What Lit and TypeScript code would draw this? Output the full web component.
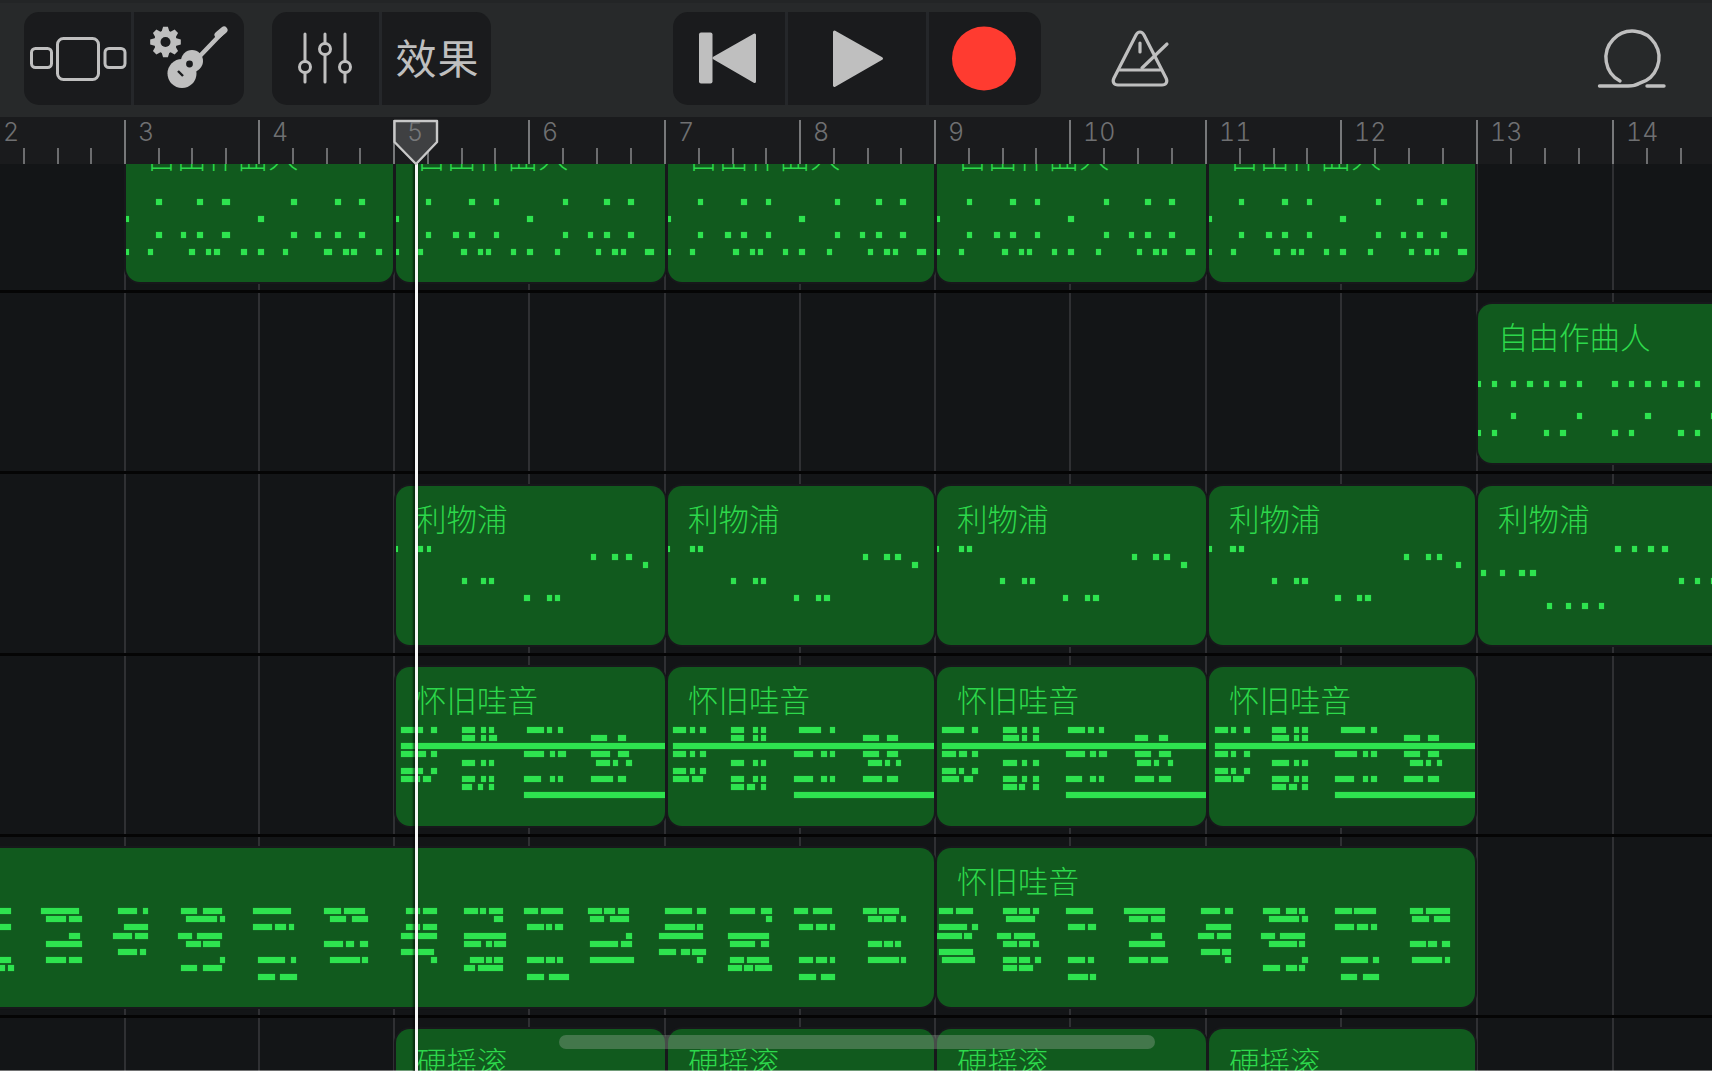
import { LitElement, html, css, svg } from "lit";
import { customElement } from "lit/decorators.js";

type Note = { r: number; x: number; w: number };
type Clip = { a: number; b: number; title?: string; notes: Note[] };

// Note runs are written as [start,end,...] pairs per pitch row, measured on a magnified view.
const runs = (x0: number, k: number, rows: Record<number, number[]>): Note[] => {
  const out: Note[] = [];
  for (const r of Object.keys(rows)) {
    const p = rows[+r];
    for (let i = 0; i < p.length; i += 2) {
      out.push({ r: +r, x: x0 + p[i] / k, w: (p[i + 1] - p[i]) / k });
    }
  }
  return out;
};
const shift = (n: Note[], d: number): Note[] => n.map((v) => ({ ...v, x: v.x + d }));

const K26 = 1568 / 600;
const K29 = 1568 / 540;
const K28 = 1568 / 550;

// Row 1
const r1a = runs(100, K26, {
  2: [146, 162, 254, 270, 319, 341, 498, 514, 613, 629, 678, 693],
  4: [68, 76, 413, 428],
  6: [146, 162, 211, 226, 254, 270, 319, 341, 498, 514, 563, 578, 613, 629, 678, 693],
  8: [68, 76, 125, 140, 232, 248, 276, 291, 298, 313, 369, 385, 413, 428, 477, 492, 585, 607, 635, 650, 657, 672, 721, 737],
});
const r1b = runs(100, K26, {
  2: [851, 865, 965, 980, 1030, 1044, 1209, 1224, 1317, 1332, 1381, 1396],
  4: [773, 780, 1116, 1131],
  6: [851, 865, 923, 937, 965, 980, 1030, 1044, 1209, 1224, 1274, 1288, 1317, 1332, 1381, 1396],
  8: [773, 780, 830, 845, 944, 958, 987, 1002, 1009, 1023, 1073, 1088, 1116, 1131, 1188, 1203, 1296, 1310, 1339, 1354, 1361, 1375, 1425, 1447],
});

// Row 2
const r2 = runs(1200, 3, {
  2: [834, 842, 875, 891, 933, 949, 982, 998, 1032, 1048, 1081, 1097, 1131, 1147, 1237, 1254, 1287, 1303, 1336, 1353, 1386, 1402, 1435, 1451, 1485, 1501],
  6: [933, 949, 1131, 1147, 1336, 1353, 1534, 1550],
  8: [834, 842, 875, 891, 1032, 1048, 1081, 1097, 1237, 1254, 1287, 1303, 1435, 1451, 1485, 1501],
});

// Row 3
const r3a = runs(380, K26, {
  0: [40, 48, 100, 112, 122, 133],
  1: [550, 565, 607, 622, 643, 658],
  2: [686, 701],
  4: [213, 227, 263, 277, 284, 299],
  6: [377, 392, 435, 450, 456, 471],
});
const r3b = runs(380, K26, {
  0: [752, 758, 809, 823, 830, 845],
  1: [1261, 1275, 1318, 1333, 1347, 1362],
  2: [1390, 1405],
  4: [916, 931, 974, 988, 995, 1010],
  6: [1081, 1096, 1139, 1153, 1160, 1175],
});
const r3d = runs(1200, 3, {
  0: [27, 35, 91, 108, 117, 133],
  1: [611, 628, 677, 694, 710, 727],
  2: [768, 784],
  4: [216, 232, 282, 298, 307, 323],
  6: [405, 422, 471, 487, 496, 512],
});
const r3e = runs(1200, 3, {
  0: [1245, 1262, 1295, 1312, 1345, 1362, 1386, 1403],
  3: [843, 859, 900, 916, 958, 974, 991, 1007],
  4: [1436, 1451, 1485, 1501, 1534, 1550],
  7: [1040, 1056, 1098, 1113, 1147, 1163, 1197, 1213],
});

// Row 4
const r4a = runs(380, K26, {
  0: [55, 112, 133, 148, 213, 248, 263, 278, 284, 299, 385, 428, 435, 450, 464, 479],
  1: [213, 248, 263, 278, 284, 306, 550, 593, 622, 643],
  2: [55, 744],
  3: [55, 119, 133, 148, 377, 428, 443, 457, 464, 486, 550, 600, 622, 651],
  4: [213, 248, 263, 278, 284, 299, 564, 600, 608, 622, 643, 658],
  5: [55, 112, 133, 148],
  6: [55, 105, 112, 133, 213, 248, 263, 278, 284, 299, 377, 421, 443, 457, 464, 479, 550, 608, 622, 643],
  7: [213, 241, 255, 270, 284, 299],
  8: [377, 744],
});
const r4b = runs(380, K26, {
  0: [765, 801, 809, 823, 837, 852, 916, 952, 974, 989, 995, 1010, 1096, 1153, 1175, 1189],
  1: [916, 952, 974, 989, 995, 1010, 1261, 1304, 1326, 1355],
  2: [765, 1448],
  3: [765, 801, 809, 823, 837, 852, 1081, 1131, 1153, 1167, 1175, 1189, 1261, 1304, 1326, 1355],
  4: [916, 952, 974, 989, 995, 1010, 1275, 1311, 1319, 1333, 1348, 1362],
  5: [765, 801, 809, 823, 837, 852],
  6: [765, 809, 816, 845, 916, 952, 974, 989, 995, 1010, 1081, 1131, 1153, 1167, 1175, 1189, 1261, 1311, 1326, 1355],
  7: [916, 952, 960, 981, 995, 1010],
  8: [1081, 1448],
});
const r4c = runs(930, K28, {
  0: [34, 98, 121, 137, 207, 247, 262, 278, 293, 310, 394, 442, 449, 466, 482, 497],
  1: [207, 254, 262, 278, 293, 310, 584, 622, 654, 678],
  2: [34, 787],
  3: [34, 74, 82, 105, 121, 137, 388, 442, 457, 474, 482, 505, 584, 630, 654, 686],
  4: [207, 247, 262, 278, 293, 310, 591, 630, 638, 654, 678, 693],
  5: [34, 74, 82, 98, 121, 137],
  6: [34, 82, 97, 122, 207, 247, 262, 278, 293, 310, 388, 434, 457, 474, 482, 497, 584, 638, 654, 686],
  7: [207, 247, 254, 270, 293, 310],
  8: [388, 787],
});
const r4d = runs(930, K28, {
  0: [811, 850, 857, 873, 896, 912, 975, 1014, 1038, 1053, 1061, 1077, 1171, 1241, 1256, 1273],
  1: [975, 1022, 1038, 1053, 1061, 1077, 1350, 1398, 1421, 1452],
  2: [811, 1553],
  3: [811, 850, 857, 873, 896, 912, 1155, 1217, 1233, 1249, 1256, 1273, 1350, 1398, 1421, 1452],
  4: [975, 1022, 1038, 1053, 1061, 1077, 1367, 1405, 1413, 1429, 1445, 1460],
  5: [811, 850, 857, 873, 896, 912],
  6: [811, 857, 865, 896, 975, 1022, 1038, 1053, 1061, 1077, 1155, 1210, 1233, 1249, 1256, 1273, 1350, 1405, 1421, 1452],
  7: [975, 1014, 1022, 1045, 1061, 1077],
  8: [1155, 1553],
});

// Row 5
const r5long = [
  ...runs(0, K26, {
    0: [0, 28, 107, 208, 308, 358, 373, 387, 474, 516, 531, 581, 660, 760, 847, 890, 898, 955, 1062, 1098, 1105, 1141],
    1: [121, 172, 179, 214, 487, 567, 574, 589, 861, 904, 919, 962],
    2: [0, 28, 323, 387, 660, 710, 718, 747, 754, 768, 1062, 1098, 1105, 1141],
    3: [179, 208, 294, 344, 352, 387, 466, 502, 516, 581, 1048, 1141],
    4: [121, 214, 487, 524, 531, 574, 847, 897, 904, 926, 940, 962],
    5: [308, 358, 366, 381, 1048, 1134],
    6: [0, 28, 121, 172, 179, 214, 574, 589, 674, 746, 760, 775, 861, 940, 947, 962, 1127, 1141],
    7: [0, 14, 22, 36, 474, 516, 531, 581],
    8: [674, 718, 732, 775],
  }),
  ...runs(400, K29, {
    0: [186, 226, 233, 250, 257, 298, 361, 402, 409, 474, 546, 586, 592, 624, 632, 665, 768, 849, 863, 889, 959, 1032, 1048, 1080, 1143, 1184, 1199, 1256, 1343, 1384, 1391, 1448],
    1: [274, 298, 553, 592, 609, 665, 1064, 1080, 1360, 1399, 1406, 1439, 1455, 1470],
    2: [370, 418, 425, 442, 449, 474, 768, 857, 863, 881, 1159, 1200, 1207, 1240, 1248, 1263],
    3: [186, 307, 656, 673, 753, 881, 952, 1072],
    4: [186, 234, 250, 266, 274, 307, 553, 633, 641, 673, 959, 1032, 1048, 1072, 1360, 1399, 1406, 1431, 1438, 1455],
    5: [753, 801, 817, 841, 849, 889],
    6: [202, 243, 250, 266, 274, 298, 370, 418, 425, 450, 457, 474, 553, 681, 863, 881, 959, 1000, 1008, 1072, 1159, 1200, 1207, 1240, 1248, 1263, 1360, 1448, 1455, 1470],
    7: [186, 218, 225, 298, 952, 992, 1000, 1024, 1032, 1080],
    8: [370, 418, 433, 490, 1159, 1207, 1223, 1263],
  }),
];
const r5b = runs(930, K28, {
  0: [26, 66, 74, 122, 207, 247, 254, 286, 293, 310, 388, 466, 552, 669, 772, 826, 842, 865, 950, 998, 1014, 1045, 1052, 1069, 1155, 1202, 1210, 1273, 1367, 1405, 1413, 1483],
  1: [216, 300, 567, 622, 629, 669, 967, 1053, 1061, 1077, 1374, 1421, 1437, 1483],
  2: [26, 105, 121, 137, 394, 442, 449, 474, 787, 857, 1155, 1210, 1217, 1249, 1256, 1273],
  3: [20, 90, 97, 121, 191, 231, 238, 300, 629, 661, 763, 810, 818, 857, 944, 983, 998, 1069],
  4: [207, 247, 254, 286, 293, 310, 567, 669, 967, 1045, 1052, 1069, 1367, 1413, 1421, 1445, 1460, 1483],
  5: [26, 122, 772, 826, 833, 857],
  6: [34, 128, 207, 247, 254, 286, 300, 317, 394, 442, 449, 466, 567, 622, 629, 678, 842, 857, 1061, 1077, 1171, 1249, 1264, 1280, 1374, 1460, 1468, 1483],
  7: [207, 247, 254, 294, 950, 998, 1014, 1045, 1052, 1069],
  8: [394, 450, 457, 474, 1171, 1217, 1233, 1280],
});

const FREE = "自由作曲人";
const LIV = "利物浦";
const WAH = "怀旧哇音";
const ROCK = "硬摇滚";

const ROWS: Clip[][] = [
  [
    { a: 126, b: 393, title: FREE, notes: r1a },
    { a: 396, b: 665, title: FREE, notes: r1b },
    { a: 668, b: 934, title: FREE, notes: shift(r1b, 272) },
    { a: 937, b: 1206, title: FREE, notes: shift(r1b, 541) },
    { a: 1209, b: 1475, title: FREE, notes: shift(r1b, 813) },
  ],
  [{ a: 1478, b: 1740, title: FREE, notes: r2 }],
  [
    { a: 396, b: 665, title: LIV, notes: r3a },
    { a: 668, b: 934, title: LIV, notes: r3b },
    { a: 937, b: 1206, title: LIV, notes: shift(r3b, 269) },
    { a: 1209, b: 1475, title: LIV, notes: r3d },
    { a: 1478, b: 1740, title: LIV, notes: r3e },
  ],
  [
    { a: 396, b: 665, title: WAH, notes: r4a },
    { a: 668, b: 934, title: WAH, notes: r4b },
    { a: 937, b: 1206, title: WAH, notes: r4c },
    { a: 1209, b: 1475, title: WAH, notes: r4d },
  ],
  [
    { a: -30, b: 934, notes: r5long },
    { a: 937, b: 1475, title: WAH, notes: r5b },
  ],
  [
    { a: 396, b: 665, title: ROCK, notes: [] },
    { a: 668, b: 934, title: ROCK, notes: [] },
    { a: 937, b: 1206, title: ROCK, notes: [] },
    { a: 1209, b: 1475, title: ROCK, notes: [] },
  ],
];

const BARS: [number, number][] = [
  [2, -10], [3, 125], [4, 259], [5, 394], [6, 529], [7, 665], [8, 800], [9, 935],
  [10, 1070], [11, 1206], [12, 1341], [13, 1477], [14, 1613],
];

const gearPath = (cx: number, cy: number, ro: number, ri: number, n: number) => {
  const pts: string[] = [];
  const step = (Math.PI * 2) / n;
  for (let i = 0; i < n; i++) {
    const t = i * step - Math.PI / 2;
    const at = (r: number, o: number) =>
      `${(cx + r * Math.cos(t + o)).toFixed(2)} ${(cy + r * Math.sin(t + o)).toFixed(2)}`;
    pts.push(at(ri, -step * 0.42), at(ro, -step * 0.2), at(ro, step * 0.2), at(ri, step * 0.42));
  }
  return "M" + pts.join("L") + "Z";
};

@customElement("app-root")
export class AppRoot extends LitElement {
  static styles = css`
    :host {
      display: block;
      width: 1712px;
      height: 1071px;
      overflow: hidden;
      background: #131517;
      font-family: "Inter", "Noto Sans CJK SC", sans-serif;
    }
    .page {
      position: relative;
      display: flex;
      flex-direction: column;
      width: 1712px;
      height: 1071px;
      overflow: hidden;
    }
    .toolbar {
      flex: none;
      box-sizing: border-box;
      height: 117px;
      display: flex;
      align-items: flex-start;
      padding: 12px 0 0 24px;
      background: #27292a;
      box-shadow: inset 0 3px 0 #232526;
    }
    .group {
      display: flex;
      height: 93px;
      border-radius: 15px;
      background: #1a1b1d;
      overflow: hidden;
      flex: none;
    }
    .group + .group { margin-left: 28px; }
    .group.transport { margin-left: 182px; }
    .cell { display: flex; align-items: center; justify-content: center; flex: none; }
    .cell + .cell { border-left: 3px solid #25272a; }
    .icon { display: block; flex: none; }
    .fx {
      box-sizing: border-box;
      width: 109px;
      padding-left: 2px;
      font-family: "Noto Sans CJK SC", sans-serif;
      font-size: 41px;
      line-height: 89px;
      height: 93px;
      letter-spacing: 1px;
      color: #bfbfbf;
      white-space: nowrap;
      text-align: center;
    }
    .free-icon { margin-top: 12px; flex: none; }
    .metro { margin-left: 64px; }
    .loop { margin-left: auto; margin-right: 40px; }
    .ruler {
      flex: none;
      position: relative;
      height: 47px;
      background: #1a1b1d;
    }
    .major, .minor { position: absolute; bottom: 0; width: 2px; }
    .major { top: 3px; background: #77787a; }
    .minor { height: 16px; background: #6c6d6f; }
    .num {
      position: absolute;
      top: 0;
      font-size: 25px;
      line-height: 30px;
      font-weight: 300;
      font-variant-numeric: tabular-nums;
      color: #6f7072;
    }
    .tracks {
      position: relative;
      flex: 1;
      overflow: hidden;
    }
    .grid {
      position: absolute;
      top: 0;
      bottom: 0;
      width: 2px;
      background: #2f3033;
    }
    .row {
      position: relative;
      box-sizing: border-box;
      height: 181.25px;
      border-bottom: 3px solid #050505;
    }
    .row.first { margin-top: -52.25px; }
    .clip {
      position: absolute;
      top: 11.3px;
      height: 159px;
      border-radius: 14px;
      background: #115a1e;
      box-shadow: 0 0 0 2px #17181b;
      overflow: hidden;
    }
    .title {
      padding: 16px 0 0 20px;
      font-family: "Noto Sans CJK SC", sans-serif;
      font-weight: 300;
      font-size: 30.5px;
      line-height: 32px;
      color: #2dd84b;
      white-space: nowrap;
    }
    .note {
      position: absolute;
      height: 6px;
      background: #2ee34f;
      box-shadow: 0 0 1px rgba(46, 227, 79, 0.6);
    }
    .playline {
      position: absolute;
      left: 415px;
      top: 160px;
      bottom: 0;
      width: 2.6px;
      background: #f6f6f6;
      box-shadow: -1px 0 2px 1px rgba(0, 0, 0, 0.55);
    }
    .playhead {
      position: absolute;
      left: 392px;
      top: 119px;
    }
    .headnum {
      position: absolute;
      left: 407.5px;
      top: 117px;
      font-size: 25px;
      line-height: 30px;
      font-weight: 300;
      color: #77787a;
    }
    .scrollbar {
      position: absolute;
      left: 559px;
      top: 1035px;
      width: 596px;
      height: 14px;
      border-radius: 7px;
      background: rgba(160, 176, 160, 0.35);
    }
    .edge {
      position: absolute;
      left: 0;
      right: 0;
      bottom: 0;
      height: 1.5px;
      background: rgba(255, 255, 255, 0.4);
    }
  `;

  private ruler() {
    const marks = [];
    for (let i = 0; i < BARS.length; i++) {
      const [n, x] = BARS[i];
      const next = i + 1 < BARS.length ? BARS[i + 1][1] : x + 136;
      if (x > 0) marks.push(html`<div class="major" style="left:${x - 1}px"></div>`);
      for (let k = 1; k < 4; k++) {
        const mx = x + ((next - x) * k) / 4;
        marks.push(html`<div class="minor" style="left:${mx - 1}px"></div>`);
      }
      if (n !== 5) marks.push(html`<div class="num" style="left:${Math.max(x + 13, 0)}px">${n}</div>`);
    }
    return marks;
  }

  private clip(c: Clip) {
    const w = c.b - c.a;
    return html`<div class="clip" style="left:${c.a}px;width:${w}px">
      ${c.title ? html`<div class="title">${c.title}</div>` : null}
      ${c.notes.map(
        (n) =>
          html`<div
            class="note"
            style="left:${(n.x - c.a).toFixed(1)}px;top:${(60 + 8.2 * n.r).toFixed(1)}px;width:${n.w.toFixed(1)}px"
          ></div>`
      )}
    </div>`;
  }

  render() {
    const ink = "#bfbfbf";
    const bg = "#1a1b1d";
    return html`<div class="page">
      <div class="toolbar">
        <div class="group">
          <div class="cell">
            <svg class="icon" width="107" height="93" viewBox="24 12 107 93" fill="none" stroke=${ink} stroke-width="3">
              <rect x="31.5" y="48.5" width="20" height="19" rx="4" />
              <rect x="57.5" y="38.5" width="41" height="41" rx="6" />
              <rect x="105" y="48.5" width="20" height="19" rx="4" />
            </svg>
          </div>
          <div class="cell">
            <svg class="icon" width="110" height="93" viewBox="134 12 110 93" fill=${ink}>
              <path d=${gearPath(165.5, 42, 15.5, 11.5, 8)} />
              <circle cx="165.5" cy="42" r="5" fill=${bg} />
              <circle cx="182" cy="73.5" r="14.5" />
              <circle cx="192" cy="61" r="11" />
              <path d="M198 58 L221 34" stroke=${ink} stroke-width="4.5" stroke-linecap="round" />
              <path d="M218 35 L224 30" stroke=${ink} stroke-width="7" stroke-linecap="round" />
              <circle cx="189.5" cy="64" r="3.4" fill=${bg} />
              <path d="M178 71 L183 76" stroke=${bg} stroke-width="2.4" />
            </svg>
          </div>
        </div>
        <div class="group">
          <div class="cell">
            <svg class="icon" width="107" height="93" viewBox="272 12 107 93" fill="none" stroke=${ink} stroke-width="3" stroke-linecap="round">
              <path d="M305 34V82M325 34V82M345 34V82" />
              <circle cx="305" cy="67" r="5.5" fill=${bg} />
              <circle cx="325" cy="49" r="5.5" fill=${bg} />
              <circle cx="345" cy="67" r="5.5" fill=${bg} />
            </svg>
          </div>
          <div class="cell"><div class="fx">效果</div></div>
        </div>
        <div class="group transport">
          <div class="cell">
            <svg class="icon" width="112" height="93" viewBox="673 12 112 93" fill=${ink} stroke=${ink} stroke-linejoin="round">
              <rect x="699" y="32.5" width="13.5" height="51" rx="2" stroke="none" />
              <path d="M714 58 L754.5 35 V81.5 Z" stroke-width="3" />
            </svg>
          </div>
          <div class="cell">
            <svg class="icon" width="138" height="93" viewBox="788 12 138 93" fill=${ink} stroke=${ink} stroke-linejoin="round">
              <path d="M834.5 32 L881.5 58.5 L834.5 85.5 Z" stroke-width="3" />
            </svg>
          </div>
          <div class="cell">
            <svg class="icon" width="112" height="93" viewBox="929 12 112 93">
              <circle cx="984" cy="58.5" r="32" fill="#ff3b30" />
            </svg>
          </div>
        </div>
        <svg class="icon free-icon metro" width="70" height="70" viewBox="1105 24 70 70" fill="none" stroke=${ink} stroke-width="3.2" stroke-linecap="round" stroke-linejoin="round">
          <path d="M1136 35 C1138 31 1142 31 1144 35 L1166 78 C1168 82 1166 85 1162 85 H1118 C1114 85 1112 82 1114 78 Z" />
          <path d="M1120 70 H1160" />
          <path d="M1140 43 V52" />
          <path d="M1142 68 L1167 44" />
        </svg>
        <svg class="icon free-icon loop" width="80" height="70" viewBox="1592 24 80 70" fill="none" stroke=${ink} stroke-width="3.4" stroke-linecap="round" stroke-linejoin="round">
          <path d="M1620 81 A26.5 26.5 0 1 1 1640 83 Q1635 86 1628 86 L1599.5 86" />
          <path d="M1647 86 H1664" />
        </svg>
      </div>
      <div class="ruler">${this.ruler()}</div>
      <div class="tracks">
        ${BARS.filter((b) => b[1] > 0).map((b) => html`<div class="grid" style="left:${b[1] - 1}px"></div>`)}
        ${ROWS.map(
          (clips, i) => html`<div class="row ${i === 0 ? "first" : ""}">${clips.map((c) => this.clip(c))}</div>`
        )}
        <div class="edge"></div>
      </div>
      <div class="playline"></div>
      <svg class="playhead" width="48" height="47" viewBox="392 119 48 47">
        ${svg`<path d="M394.5 121 H437 V142 L416 164 L394.5 142 Z" fill="#3f4042" stroke="#c8c8c8" stroke-width="2.4" stroke-linejoin="round" />`}
      </svg>
      <div class="headnum">5</div>
      <div class="scrollbar"></div>
    </div>`;
  }
}
